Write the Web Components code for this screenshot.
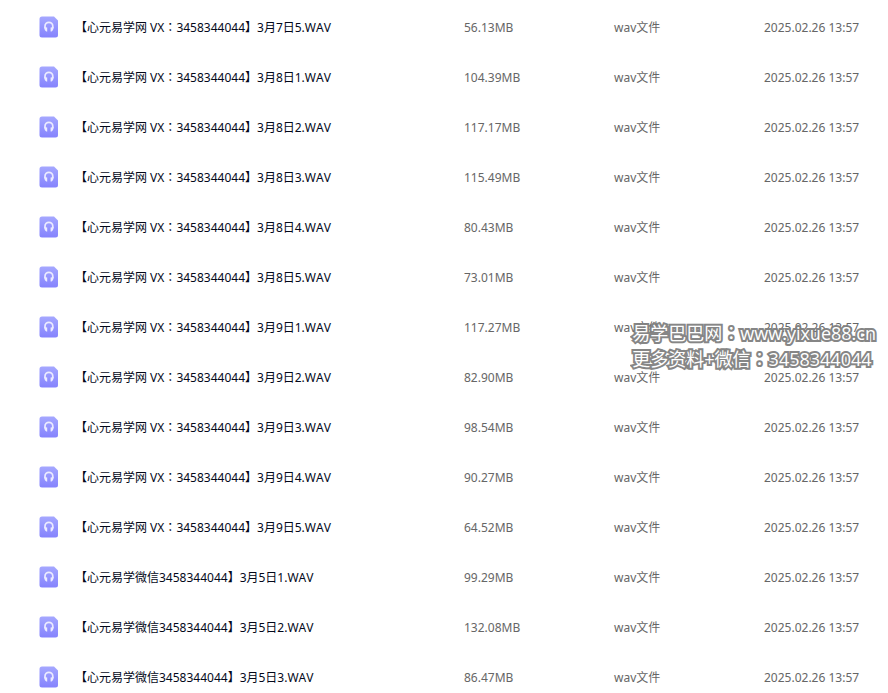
<!DOCTYPE html>
<html lang="zh-CN">
<head>
<meta charset="utf-8">
<title>文件列表</title>
<style>
  body {
    margin: 0;
    background: #fff;
    font-family: "Noto Sans", "Noto Sans CJK SC", sans-serif;
    font-kerning: none;
    overflow: hidden;
  }
</style>
</head>
<body>
<file-browser>
  <file-table></file-table>
  <water-mark slot="overlay">
    <span>易学巴巴网<span lang="zh-TW">：</span>www.yixue88.cn</span>
    <span>更多资料+微信<span lang="zh-TW">：</span>3458344044</span>
  </water-mark>
</file-browser>

<script>
{
  // the Taiwanese form of the full-width colon sits in the middle of its box
  const colon = '<span lang="zh-TW">：</span>';

  const files = [
    ['【心元易学网 VX：3458344044】3月7日5.WAV', '56.13MB'],
    ['【心元易学网 VX：3458344044】3月8日1.WAV', '104.39MB'],
    ['【心元易学网 VX：3458344044】3月8日2.WAV', '117.17MB'],
    ['【心元易学网 VX：3458344044】3月8日3.WAV', '115.49MB'],
    ['【心元易学网 VX：3458344044】3月8日4.WAV', '80.43MB'],
    ['【心元易学网 VX：3458344044】3月8日5.WAV', '73.01MB'],
    ['【心元易学网 VX：3458344044】3月9日1.WAV', '117.27MB'],
    ['【心元易学网 VX：3458344044】3月9日2.WAV', '82.90MB'],
    ['【心元易学网 VX：3458344044】3月9日3.WAV', '98.54MB'],
    ['【心元易学网 VX：3458344044】3月9日4.WAV', '90.27MB'],
    ['【心元易学网 VX：3458344044】3月9日5.WAV', '64.52MB'],
    ['【心元易学微信3458344044】3月5日1.WAV', '99.29MB'],
    ['【心元易学微信3458344044】3月5日2.WAV', '132.08MB'],
    ['【心元易学微信3458344044】3月5日3.WAV', '86.47MB'],
  ];

  class FileBrowser extends HTMLElement {
    constructor() {
      super();
      this.attachShadow({mode: 'open'});
      this.shadowRoot.innerHTML = `
        <style>
          :host {
            display: block;
            position: relative;
            padding-top: 2px;
          }
        </style>
        <slot></slot>
        <slot name="overlay"></slot>
      `;
    }
  }

  // rounded sheet with a cut corner and headphones on it
  class AudioIcon extends HTMLElement {
    constructor() {
      super();
      this.attachShadow({mode: 'open'});
      this.shadowRoot.innerHTML = `
        <style>
          :host { display: block; flex: none; }
          svg { display: block; }
        </style>
        <svg width="20" height="22" viewBox="0 0 20 22" aria-hidden="true">
          <defs>
            <linearGradient id="sheet" x1="0" y1="0" x2="0" y2="1">
              <stop offset="0" stop-color="#a5a7ff"/>
              <stop offset="1" stop-color="#8583fd"/>
            </linearGradient>
          </defs>
          <path fill="url(#sheet)" d="M3 .5h12L19 4.500v14.500a2.500 2.500 0 0 1-2.500 2.500H3A2.500 2.500 0 0 1 .5 19V3A2.500 2.500 0 0 1 3 .5z"/>
          <path fill="none" stroke="#ecebff" stroke-width="1.700" d="M6 12.500V10.200a3.900 3.900 0 0 1 7.800 0v2.300"/>
          <path fill="#ecebff" d="M5.200 11l3 .6v4H7.200Q5.200 14.200 5.200 11zM14.600 11l-3 .6v4h1Q14.600 14.200 14.600 11z"/>
        </svg>
      `;
    }
  }

  class FileTable extends HTMLElement {
    constructor() {
      super();
      this.attachShadow({mode: 'open'});
      this.render();
    }

    style() {
      return `
      <style>
        :host {
          display: block;
          font-size: 12px;
          line-height: 18px;
          color: #666;
        }
        table {
          width: 100%;
          table-layout: fixed;
          border-collapse: collapse;
        }
        td {
          height: 48px;
          padding: 2px 0 0;
          white-space: nowrap;
        }
        td:first-child { padding: 0; height: 50px; }
        .size, .type { width: 150px; }
        .date { width: 124px; }
        .name {
          display: flex;
          align-items: center;
          gap: 16px;
          padding-left: 39px;
          color: #03081a;
        }
        .name > span { padding-top: 1px; }
      </style>
    `;
    }

    render() {
      this.shadowRoot.innerHTML = `
        ${this.style()}
        <table>
          <tbody>
            ${files.map(([name, size]) => `
            <tr>
              <td><div class="name"><audio-icon></audio-icon><span>${name.replace('：', colon)}</span></div></td>
              <td class="size">${size}</td>
              <td class="type">wav文件</td>
              <td class="date">2025.02.26 13:57</td>
            </tr>`).join('')}
          </tbody>
        </table>
      `;
    }
  }

  class WaterMark extends HTMLElement {
    constructor() {
      super();
      this.attachShadow({mode: 'open'});
      this.shadowRoot.innerHTML = `
        <style>
          :host {
            position: absolute;
            top: 320px;
            right: 12px;
            display: flex;
            flex-direction: column;
            font-family: "Open Sans", "Noto Sans CJK SC", sans-serif;
            font-kerning: auto;
            font-size: 18px;
            line-height: 26px;
            white-space: nowrap;
            color: #fff;
            -webkit-text-stroke: 4px #808080;
            paint-order: stroke fill;
            opacity: .95;
            pointer-events: none;
          }
        </style>
        <slot></slot>
      `;
    }
  }

  customElements.define('audio-icon', AudioIcon);
  customElements.define('file-table', FileTable);
  customElements.define('water-mark', WaterMark);
  customElements.define('file-browser', FileBrowser);
}
</script>
</body>
</html>
